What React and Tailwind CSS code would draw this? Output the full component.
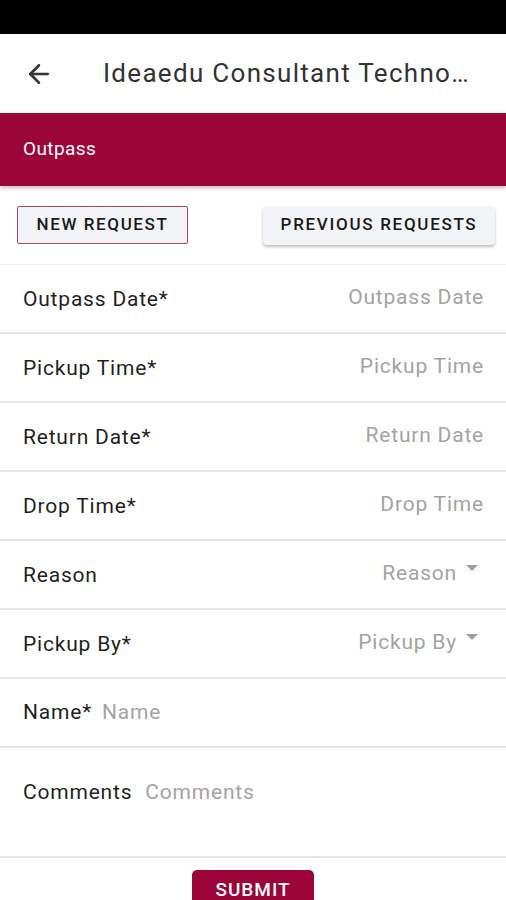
import { ArrowLeft } from "lucide-react";

const rows = [
  { label: "Outpass Date*", placeholder: "Outpass Date" },
  { label: "Pickup Time*", placeholder: "Pickup Time" },
  { label: "Return Date*", placeholder: "Return Date" },
  { label: "Drop Time*", placeholder: "Drop Time" },
  { label: "Reason", placeholder: "Reason", select: true },
  { label: "Pickup By*", placeholder: "Pickup By", select: true },
];

function Caret() {
  return (
    <svg width="12" height="7" viewBox="0 0 12 7" className="ml-[9px] -mt-3">
      <path d="M0 0h12L6 6z" fill="#9e9e9e" />
    </svg>
  );
}

export default function App() {
  return (
    <div
      className="w-[506px] h-[900px] overflow-hidden bg-white flex flex-col"
      style={{ fontFamily: "Roboto, 'Liberation Sans', sans-serif" }}
    >
      {/* status bar */}
      <div className="h-[34px] bg-black shrink-0" />

      {/* app bar */}
      <div className="h-[79px] shrink-0 flex items-center pl-[24px] pr-[20px]">
        <ArrowLeft size={30} strokeWidth={2} className="text-[#333] shrink-0" />
        <div className="ml-[49px] whitespace-nowrap text-[26px] text-[#333] tracking-[1.3px]">
          Ideaedu Consultant Techno…
        </div>
      </div>

      {/* banner */}
      <div className="h-[73px] shrink-0 bg-[#9c0537] flex items-center px-[23px] shadow-[0_2px_4px_rgba(0,0,0,0.25)] relative z-10">
        <span className="text-white text-[19px] tracking-[0.4px]">Outpass</span>
      </div>

      {/* tabs */}
      <div className="h-[79px] shrink-0 flex items-center justify-between pl-[17px] pr-[11px] border-b border-[#eeeeee]">
        <button className="h-[38px] w-[171px] border-[1.5px] border-[#a8475f] bg-[#f3f4f7] rounded-[2px] text-[17px] font-medium tracking-[1.6px] text-[#1a1a1a]">
          NEW REQUEST
        </button>
        <button className="h-[39px] w-[232px] bg-[#f3f4f7] rounded-[4px] shadow-[0_2px_3px_rgba(0,0,0,0.25)] text-[17px] font-medium tracking-[1.7px] text-[#1a1a1a]">
          PREVIOUS REQUESTS
        </button>
      </div>

      {/* form */}
      {rows.map((r) => (
        <div
          key={r.label}
          className={`h-[69px] shrink-0 flex items-center justify-between pl-[23px] border-b-2 border-[#e6e6e6] ${
            r.select ? "pr-[28px]" : "pr-[22px]"
          }`}
        >
          <span className="text-[21px] tracking-[0.8px] text-[#1f1f1f] mt-[3px]">{r.label}</span>
          <span className="flex items-center text-[21px] tracking-[0.8px] text-[#a3a3a3] mt-[-1px]">
            {r.placeholder}
            {r.select && <Caret />}
          </span>
        </div>
      ))}

      <div className="h-[69px] shrink-0 flex items-center px-[23px] border-b-2 border-[#e6e6e6]">
        <span className="text-[21px] tracking-[0.8px] text-[#1f1f1f] mt-[1px]">Name*</span>
        <span className="ml-[10px] text-[21px] tracking-[0.8px] text-[#a3a3a3] mt-[1px]">Name</span>
      </div>

      <div className="h-[110px] shrink-0 flex items-start pt-[29px] px-[23px] border-b-2 border-[#e6e6e6]">
        <span className="text-[21px] tracking-[0.8px] text-[#1f1f1f]">Comments</span>
        <span className="ml-[13px] text-[21px] tracking-[0.8px] text-[#a3a3a3]">Comments</span>
      </div>

      <div className="flex justify-center pt-[12px]">
        <button className="h-[44px] w-[122px] bg-[#9c0537] rounded-[5px] text-white text-[19px] font-medium tracking-[1px] pt-[6px] flex justify-center items-start">
          SUBMIT
        </button>
      </div>
    </div>
  );
}
